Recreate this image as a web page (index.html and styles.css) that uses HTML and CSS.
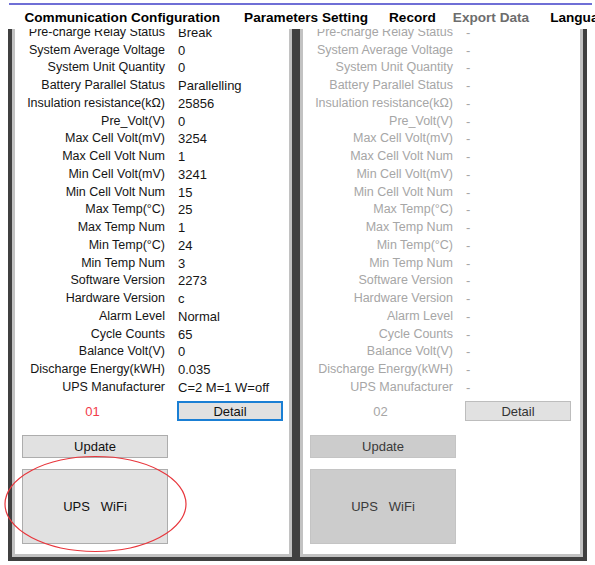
FILE: index.html
```html
<html>

<head>
    <title>BMS Monitor</title>
    <link rel="stylesheet" href="styles.css">
</head>

<body>
    <div class="top-line"></div>
    <nav class="menu-bar">
        <span class="grip"></span>
        <span class="menu-item first">Communication Configuration</span>
        <span class="menu-item">Parameters Setting</span>
        <span class="menu-item short">Record</span>
        <span class="menu-item disabled">Export Data</span>
        <span class="menu-item">Language</span>
    </nav>

    <main class="units">
        <section class="unit">
            <div class="unit-body">
                <div class="row"><span class="label">Charge Relay Status</span><span class="value">Break</span></div>
                <div class="row"><span class="label">Discharge Relay Status</span><span class="value">Break</span></div>
                <div class="row"><span class="label">Pre-charge Relay Status</span><span class="value">Break</span></div>
                <div class="row"><span class="label">System Average Voltage</span><span class="value">0</span></div>
                <div class="row"><span class="label">System Unit Quantity</span><span class="value">0</span></div>
                <div class="row"><span class="label">Battery Parallel Status</span><span class="value">Parallelling</span></div>
                <div class="row"><span class="label">Insulation resistance(kΩ)</span><span class="value">25856</span></div>
                <div class="row"><span class="label">Pre_Volt(V)</span><span class="value">0</span></div>
                <div class="row"><span class="label">Max Cell Volt(mV)</span><span class="value">3254</span></div>
                <div class="row"><span class="label">Max Cell Volt Num</span><span class="value">1</span></div>
                <div class="row"><span class="label">Min Cell Volt(mV)</span><span class="value">3241</span></div>
                <div class="row"><span class="label">Min Cell Volt Num</span><span class="value">15</span></div>
                <div class="row"><span class="label">Max Temp(°C)</span><span class="value">25</span></div>
                <div class="row"><span class="label">Max Temp Num</span><span class="value">1</span></div>
                <div class="row"><span class="label">Min Temp(°C)</span><span class="value">24</span></div>
                <div class="row"><span class="label">Min Temp Num</span><span class="value">3</span></div>
                <div class="row"><span class="label">Software Version</span><span class="value">2273</span></div>
                <div class="row"><span class="label">Hardware Version</span><span class="value">c</span></div>
                <div class="row"><span class="label">Alarm Level</span><span class="value">Normal</span></div>
                <div class="row"><span class="label">Cycle Counts</span><span class="value">65</span></div>
                <div class="row"><span class="label">Balance Volt(V)</span><span class="value">0</span></div>
                <div class="row"><span class="label">Discharge Energy(kWH)</span><span class="value">0.035</span></div>
                <div class="row"><span class="label">UPS Manufacturer</span><span class="value">C=2 M=1 W=off</span></div>

                <div class="id-row">
                    <span class="unit-id">01</span>
                    <button class="btn detail-btn focused" type="button">Detail</button>
                </div>
                <button class="btn update-btn" type="button">Update</button>
                <button class="btn wifi-btn" type="button">UPS&nbsp;&nbsp;&nbsp;WiFi</button>
            </div>
        </section>

        <section class="unit unit-off">
            <div class="unit-body">
                <div class="row"><span class="label">Charge Relay Status</span><span class="value">-</span></div>
                <div class="row"><span class="label">Discharge Relay Status</span><span class="value">-</span></div>
                <div class="row"><span class="label">Pre-charge Relay Status</span><span class="value">-</span></div>
                <div class="row"><span class="label">System Average Voltage</span><span class="value">-</span></div>
                <div class="row"><span class="label">System Unit Quantity</span><span class="value">-</span></div>
                <div class="row"><span class="label">Battery Parallel Status</span><span class="value">-</span></div>
                <div class="row"><span class="label">Insulation resistance(kΩ)</span><span class="value">-</span></div>
                <div class="row"><span class="label">Pre_Volt(V)</span><span class="value">-</span></div>
                <div class="row"><span class="label">Max Cell Volt(mV)</span><span class="value">-</span></div>
                <div class="row"><span class="label">Max Cell Volt Num</span><span class="value">-</span></div>
                <div class="row"><span class="label">Min Cell Volt(mV)</span><span class="value">-</span></div>
                <div class="row"><span class="label">Min Cell Volt Num</span><span class="value">-</span></div>
                <div class="row"><span class="label">Max Temp(°C)</span><span class="value">-</span></div>
                <div class="row"><span class="label">Max Temp Num</span><span class="value">-</span></div>
                <div class="row"><span class="label">Min Temp(°C)</span><span class="value">-</span></div>
                <div class="row"><span class="label">Min Temp Num</span><span class="value">-</span></div>
                <div class="row"><span class="label">Software Version</span><span class="value">-</span></div>
                <div class="row"><span class="label">Hardware Version</span><span class="value">-</span></div>
                <div class="row"><span class="label">Alarm Level</span><span class="value">-</span></div>
                <div class="row"><span class="label">Cycle Counts</span><span class="value">-</span></div>
                <div class="row"><span class="label">Balance Volt(V)</span><span class="value">-</span></div>
                <div class="row"><span class="label">Discharge Energy(kWH)</span><span class="value">-</span></div>
                <div class="row"><span class="label">UPS Manufacturer</span><span class="value">-</span></div>

                <div class="id-row">
                    <span class="unit-id">02</span>
                    <button class="btn detail-btn" type="button">Detail</button>
                </div>
                <button class="btn update-btn" type="button" disabled>Update</button>
                <button class="btn wifi-btn" type="button" disabled>UPS&nbsp;&nbsp;&nbsp;WiFi</button>
            </div>
        </section>
    </main>

    <!-- red mark drawn over the first unit's WiFi button -->
    <svg class="mark" width="200" height="110" viewBox="0 0 200 110">
        <ellipse cx="95.5" cy="56" rx="90.5" ry="47.5" fill="none" stroke="#e8363c" stroke-width="1.2"/>
    </svg>
</body>

</html>
```

FILE: styles.css
```css
body {
    margin: 0;
    width: 595px;
    height: 565px;
    overflow: hidden;
    background: #fff;
    font-family: "Liberation Sans", Arial, sans-serif;
    font-size: 13px;
    color: #151515;
    position: relative;
}

.top-line {
    height: 2px;
    margin: 3px 3px 0 9px;
    background: #6f6fd6;
}

.menu-bar {
    display: flex;
    align-items: center;
    height: 24px;
    padding-left: 11px;
    white-space: nowrap;
    overflow: hidden;
    font-weight: bold;
    font-size: 13.6px;
    color: #000;
}

.grip {
    width: 2px;
    height: 14px;
    margin-right: 3px;
    background: repeating-linear-gradient(#a0a0a0 0 2px, transparent 2px 4px);
}

.menu-item {
    padding: 0 10.5px;
}

.menu-item.first {
    margin-right: 3px;
}

.menu-item.short {
    margin-right: -4px;
}

.menu-item.disabled {
    color: #6d6d6d;
}

.units {
    display: flex;
    height: 532px;
    margin-left: 8px;
}

.unit {
    width: 288px;
    height: 100%;
    box-sizing: border-box;
    border: 4px solid #404040;
    border-top: none;
    box-shadow: inset 3px 0 0 #c2c2c2, inset -3px 0 0 #c2c2c2, inset 0 -3px 0 #c2c2c2;
    background: #fff;
}

.unit + .unit {
    width: 291px;
}

.unit-body {
    display: flex;
    flex-direction: column;
    justify-content: flex-end;
    height: 100%;
    box-sizing: border-box;
    overflow: hidden;
    padding: 0 3px 13px 3px;
}

.row {
    display: flex;
    flex-shrink: 0;
    height: 17.75px;
    line-height: 17.75px;
    white-space: nowrap;
}

.label {
    width: 150px;
    flex-shrink: 0;
    text-align: right;
    font-size: 12.5px;
}

.value {
    padding-left: 13px;
}

.id-row {
    display: flex;
    align-items: center;
    flex-shrink: 0;
    height: 20px;
    margin-top: 4.5px;
}

.unit-id {
    width: 155px;
    text-align: center;
    color: #f23a4a;
}

.btn {
    font-family: "Liberation Sans", Arial, sans-serif;
    font-size: 13px;
    color: #111;
    background: #e1e1e1;
    border: 1px solid #adadad;
    padding: 0;
    flex-shrink: 0;
    box-sizing: border-box;
}

.btn.focused {
    border: 2px solid #1a7fd4;
}

.detail-btn {
    width: 106px;
    height: 20px;
    margin-left: 7px;
}

.update-btn {
    width: 146px;
    height: 23px;
    margin: 14px 0 0 7px;
}

.wifi-btn {
    width: 146px;
    height: 75px;
    margin: 11px 0 0 7px;
}

.unit-off .label,
.unit-off .value,
.unit-off .unit-id {
    color: #a6a6a6;
}

.unit-off .detail-btn {
    color: #333;
    border-color: #bdbdbd;
}

.unit-off .btn:disabled {
    background: #cccccc;
    border-color: #c4c4c4;
    color: #3a3a3a;
}

.mark {
    position: absolute;
    left: 0;
    top: 448px;
}
```
